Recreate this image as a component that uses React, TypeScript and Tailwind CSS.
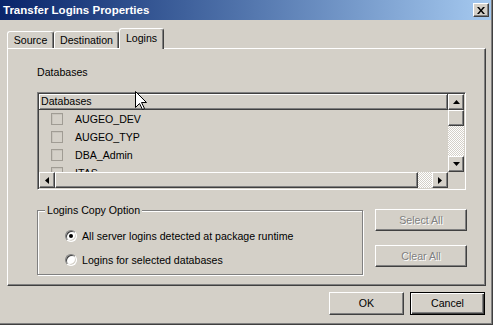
import React from "react";

const RAISED =
  "border border-t-white border-l-white border-r-[#404040] border-b-[#404040] shadow-[inset_-1px_-1px_0_#808080]";
const SUNKEN =
  "border border-t-[#808080] border-l-[#808080] border-r-white border-b-white shadow-[inset_1px_1px_0_#404040,inset_-1px_-1px_0_#d4d0c8]";
const CHECKER =
  "bg-[image:repeating-conic-gradient(#ffffff_0_25%,#d4d0c8_0_50%)] bg-[length:2px_2px]";

const DATABASES = ["AUGEO_DEV", "AUGEO_TYP", "DBA_Admin", "ITAS"];

function Arrow({ dir }: { dir: "up" | "down" | "left" | "right" }) {
  const pts = {
    up: "3.5,0 7,4 0,4",
    down: "0,0 7,0 3.5,4",
    left: "4,0 4,7 0,3.5",
    right: "0,0 4,3.5 0,7",
  }[dir];
  const vertical = dir === "up" || dir === "down";
  return (
    <svg width={vertical ? 7 : 4} height={vertical ? 4 : 7} viewBox={vertical ? "0 0 7 4" : "0 0 4 7"}>
      <polygon points={pts} fill="#000" />
    </svg>
  );
}

function ScrollBtn({ dir }: { dir: "up" | "down" | "left" | "right" }) {
  return (
    <div className={`w-[16px] h-[16px] shrink-0 bg-[#d4d0c8] flex items-center justify-center ${RAISED}`}>
      <Arrow dir={dir} />
    </div>
  );
}

function Tab({ label, active, width }: { label: string; active?: boolean; width: number }) {
  return (
    <div
      style={{ width }}
      className={`flex items-center justify-center bg-[#d4d0c8] rounded-t-[3px] border-l border-t border-r border-l-white border-t-white border-r-[#404040] shadow-[inset_-1px_0_0_#808080] ${
        active ? "h-[21px] relative z-10 pb-[2px]" : "h-[17px] mb-[1px] pt-[1px]"
      }`}
    >
      {label}
    </div>
  );
}

function Radio({ checked, label }: { checked?: boolean; label: string }) {
  return (
    <div className="flex items-center h-[14px]">
      <div className="w-[12px] h-[12px] rounded-full bg-white border border-t-[#808080] border-l-[#808080] border-r-white border-b-white shadow-[inset_1px_1px_0_#404040,inset_-1px_-1px_0_#d4d0c8] flex items-center justify-center">
        {checked && <div className="w-[4px] h-[4px] rounded-full bg-black" />}
      </div>
      <span className="ml-[5px]">{label}</span>
    </div>
  );
}

function Button({ label, disabled, isDefault }: { label: string; disabled?: boolean; isDefault?: boolean }) {
  if (isDefault) {
    return (
      <div className="w-[75px] h-[23px] border border-black bg-[#d4d0c8] shadow-[inset_1px_1px_0_#ffffff,inset_-1px_-1px_0_#404040,inset_-2px_-2px_0_#808080] flex items-center justify-center">
        {label}
      </div>
    );
  }
  return (
    <div
      className={`flex items-center justify-center bg-[#d4d0c8] ${RAISED} ${
        disabled ? "w-[92px] h-[22px] text-[#808080] [text-shadow:1px_1px_0_#ffffff]" : "w-[75px] h-[23px]"
      }`}
    >
      {label}
    </div>
  );
}

export default function App() {
  return (
    <div className="relative w-[493px] h-[325px] overflow-hidden bg-[#d4d0c8] text-[10.6px] leading-[13px] text-black font-['Liberation_Sans',Arial,sans-serif] flex flex-col border-r border-b border-r-[#404040] border-b-[#404040] shadow-[inset_-1px_-1px_0_#808080]">
      {/* Title bar */}
      <div className="h-[20px] mr-[1px] flex items-center justify-between pl-[3px] pr-[2px] bg-linear-to-r from-[#0a246a] to-[#a6caf0]">
        <span className="text-white font-bold text-[11.5px] pt-[1px]">Transfer Logins Properties</span>
        <div className={`w-[16px] h-[14px] bg-[#d4d0c8] flex items-center justify-center ${RAISED}`}>
          <svg width="8" height="7" viewBox="0 0 8 7">
            <path d="M0 0h2l2 2.5L6 0h2L5 3.5 8 7H6L4 4.5 2 7H0l3-3.5z" fill="#000" />
          </svg>
        </div>
      </div>

      {/* Tabs */}
      <div className="flex items-end mt-[8px] ml-[7px] -mb-[1px]">
        <Tab label="Source" width={47} />
        <Tab label="Destination" width={65} />
        <Tab label="Logins" width={45} active />
      </div>

      {/* Tab panel */}
      <div className="ml-[7px] w-[479px] h-[238px] border border-l-white border-t-white border-r-[#404040] border-b-[#404040] shadow-[inset_-1px_-1px_0_#808080] flex flex-col pl-[29px] pt-[17px]">
        <div className="h-[13px]">Databases</div>

        {/* List box */}
        <div className={`mt-[13px] w-[429px] h-[98px] flex flex-col bg-[#d4d0c8] ${SUNKEN} p-[1px]`}>
          <div className="flex h-[78px]">
            <div className="w-[409px] h-[78px] overflow-hidden flex flex-col">
              <div className="h-[16px] shrink-0 flex items-center pl-[2px] border-b border-r border-b-[#404040] border-r-[#404040] shadow-[inset_1px_1px_0_#ffffff,inset_-1px_-1px_0_#808080]">
                Databases
              </div>
              {DATABASES.map((db) => (
                <div key={db} className="h-[18px] shrink-0 flex items-center pl-[12px]">
                  <div className="w-[12px] h-[12px] border border-[#a09c94] shadow-[inset_1px_1px_0_#c8c4bc]" />
                  <span className="ml-[12px]">{db}</span>
                </div>
              ))}
            </div>
            <div className="w-[16px] flex flex-col">
              <ScrollBtn dir="up" />
              <div className={`w-[16px] h-[16px] bg-[#d4d0c8] ${RAISED}`} />
              <div className={`w-[16px] h-[30px] ${CHECKER}`} />
              <ScrollBtn dir="down" />
            </div>
          </div>
          <div className="flex h-[16px]">
            <ScrollBtn dir="left" />
            <div className={`w-[363px] h-[16px] bg-[#d4d0c8] ${RAISED}`} />
            <div className={`w-[14px] h-[16px] ${CHECKER}`} />
            <ScrollBtn dir="right" />
            <div className="w-[16px] h-[16px] bg-[#d4d0c8]" />
          </div>
        </div>

        {/* Options row */}
        <div className="mt-[19px] flex items-start">
          <div className="mt-[1px] w-[326px] h-[65px] border border-[#808080] shadow-[1px_1px_0_#ffffff,inset_1px_1px_0_#ffffff] flex flex-col">
            <div className="-mt-[7px] ml-[7px] px-[2px] w-fit h-[13px] bg-[#d4d0c8]">Logins Copy Option</div>
            <div className="ml-[27px] mt-[12px] flex flex-col gap-[10px]">
              <Radio checked label="All server logins detected at package runtime" />
              <Radio label="Logins for selected databases" />
            </div>
          </div>
          <div className="ml-[12px] flex flex-col gap-[14px]">
            <Button label="Select All" disabled />
            <Button label="Clear All" disabled />
          </div>
        </div>
      </div>

      {/* Dialog buttons */}
      <div className="mt-[6px] flex justify-end gap-[6px] pr-[7px]">
        <Button label="OK" />
        <Button label="Cancel" isDefault />
      </div>

      {/* Mouse pointer */}
      <svg className="absolute left-[135px] top-[91px]" width="12" height="20" viewBox="0 0 12 20">
        <path d="M0.5 0.5V16.5L4.5 12.5L7.5 18.5L9.5 17.5L6.5 11.5H11.5Z" fill="#fff" stroke="#000" strokeWidth="1" />
      </svg>
    </div>
  );
}
